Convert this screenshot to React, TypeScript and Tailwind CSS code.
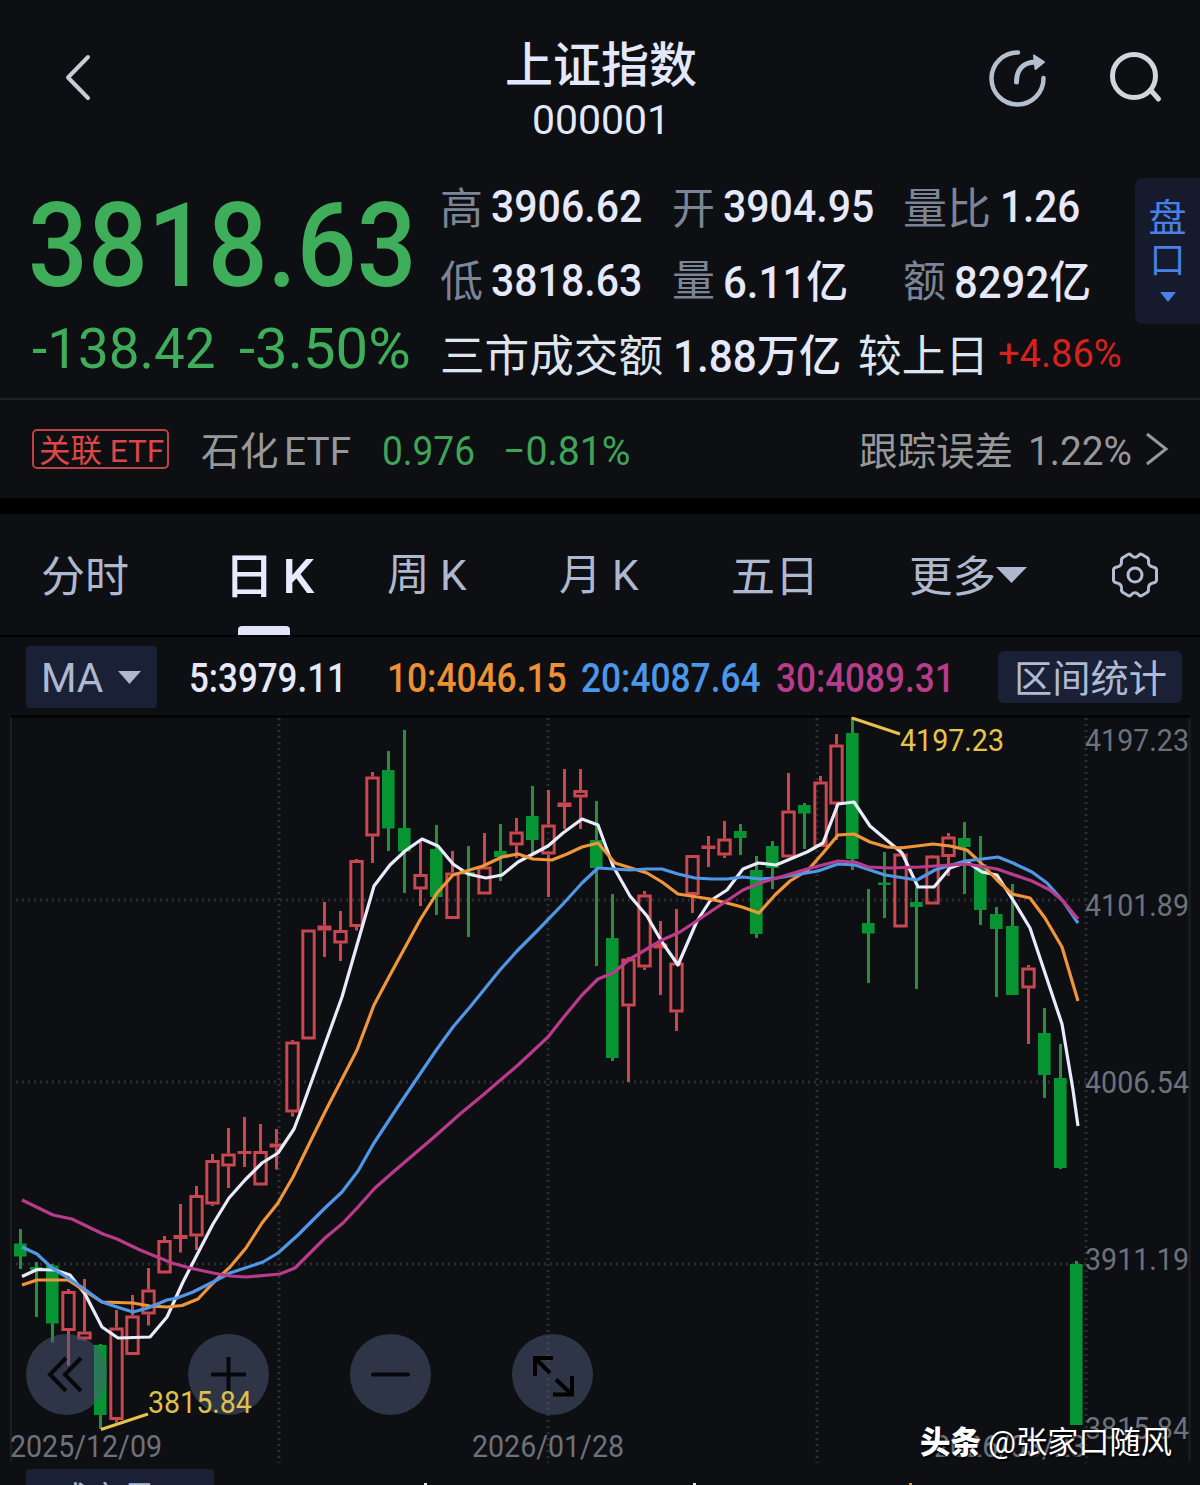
import { useLayoutEffect, useRef, useState } from 'react';
import type { ReactNode } from 'react';

type Candle = [kind: 'r' | 'g', high: number, top: number, bottom: number, low: number];

// Chart coordinates share the page's pixel grid, CHART_TOP is where the svg starts.
const CHART_TOP = 714;

const candles: Candle[] = [
  ['g', 1229, 1243.5, 1256.5, 1269],
  ['g', 1262, 1267, 1270, 1317],
  ['g', 1264, 1265.5, 1323.5, 1342.5],
  ['r', 1289, 1291, 1331, 1365.5],
  ['r', 1279, 1331.5, 1339.5, 1340.5],
  ['g', 1344, 1345, 1415, 1429],
  ['r', 1310, 1327.5, 1420, 1422.5],
  ['r', 1295, 1315.5, 1355, 1355],
  ['r', 1268, 1289.5, 1314.5, 1325.5],
  ['r', 1236, 1240, 1273.5, 1273.5],
  ['r', 1204, 1235, 1239, 1252.5],
  ['r', 1186, 1195, 1236.5, 1250],
  ['r', 1154, 1160, 1204.5, 1206],
  ['r', 1128, 1153.5, 1166.5, 1188],
  ['r', 1117, 1151, 1154, 1167],
  ['r', 1124, 1151, 1185.5, 1185.5],
  ['r', 1129, 1143.5, 1147.5, 1169.5],
  ['r', 1040, 1041.5, 1112.5, 1116.5],
  ['r', 929.5, 929.5, 1039.5, 1039.5],
  ['r', 902, 925.5, 930.5, 957],
  ['r', 911, 930, 943.5, 961],
  ['r', 859, 860, 927, 930.5],
  ['r', 772, 776.5, 836.5, 863],
  ['g', 751, 770, 828.5, 851],
  ['g', 730, 828, 851.5, 893],
  ['r', 840, 874, 889.5, 906],
  ['g', 825, 849, 897, 915],
  ['r', 851, 872.5, 919, 919],
  ['g', 846, 872, 874.5, 937],
  ['r', 833, 866.5, 894.5, 894.5],
  ['g', 824, 851, 857, 881],
  ['r', 818, 831.5, 845.5, 858],
  ['g', 786, 816, 840, 853],
  ['r', 790, 824.5, 854.5, 897],
  ['r', 769, 802.5, 807, 829],
  ['r', 769, 790, 797.5, 829],
  ['g', 801, 840, 868, 966],
  ['g', 894, 938, 1058, 1061],
  ['r', 957, 958.5, 1006.5, 1082],
  ['r', 891, 894.5, 967.5, 970],
  ['r', 921, 943.5, 948.5, 995],
  ['r', 909, 962.5, 1012.5, 1031],
  ['r', 855, 855, 895, 913],
  ['r', 836, 845.5, 849, 867],
  ['r', 821, 838.5, 855.5, 858],
  ['g', 824, 831, 838, 855],
  ['g', 856, 870, 934, 938],
  ['g', 841, 846, 868, 889],
  ['r', 773, 810.5, 857.5, 857.5],
  ['g', 803, 805, 813.5, 849],
  ['r', 776, 781.5, 847, 847],
  ['r', 734, 744.5, 804.5, 840],
  ['g', 717, 733, 859, 870],
  ['g', 889, 923, 933.5, 983],
  ['g', 852, 882.5, 885, 918],
  ['r', 846, 853.5, 927.5, 927.5],
  ['g', 887, 902, 907, 989],
  ['r', 855, 855.5, 904.5, 904.5],
  ['r', 833, 836.5, 857, 876],
  ['g', 822, 838, 847, 894],
  ['g', 836, 864, 910, 925],
  ['g', 907, 914, 929, 997],
  ['g', 884, 926, 995, 995],
  ['r', 965, 967.5, 988.5, 1044],
  ['g', 1008, 1033, 1075, 1098],
  ['g', 1044, 1078, 1168, 1169],
  ['g', 1261, 1264, 1425, 1425],
];

const averages = [
  {
    color: '#e9ebfb',
    points:
      '22,1276.5 37,1269.5 55,1270 70,1275 85,1294 102,1327 118,1338 150,1337 167,1317 183,1282 200,1249 213,1224 229,1198 245,1180 262,1163 278,1153 294,1129 302,1108 342,997 374,886 390,865 405,851 422,839 438,846 453,864 468,874 486,878 502,875 518,862 533,854 548,846 563,833 582,819 598,825 613,866 630,896 647,916 662,942 678,965 697,921 710,901 727,890 743,869 758,863 776,865 807,852 823,843 838,804 854,802 870,826 902,853 918,887 934,887 950,868 967,862 982,872 997,875 1013,900 1030,928 1046,976 1062,1024 1073,1090 1078,1126',
  },
  {
    color: '#f0953a',
    points:
      '22,1285 37,1280 68,1280 102,1302 133,1303 150,1306 167,1307 182,1305.5 198,1299 213,1283 230,1267 246,1248 262,1223 278,1203 293,1177 316,1130 327,1108 357,1050 374,1005 390,975 420,920 437,893 453,875 483,866 502,857 518,854 533,859 552,860 567,854 582,847 598,843 615,863 647,873 662,882 678,894 710,899 727,903 742,907 759,913 775,895 790,881 808,870 823,853 838,835 854,834 870,842 887,847 900,848 917,846 933,844 950,846 967,850 980,862 997,880 1012,894 1030,898 1045,918 1062,947 1078,1001',
  },
  {
    color: '#4f98e8',
    points:
      '22,1247 37,1254 52,1268 68,1278 83,1288 102,1302 117,1307 133,1312 148,1308 167,1300 177,1298 193,1292 213,1282 230,1273 263,1262 278,1253 298,1235 325,1208 342,1192 358,1171 374,1143 397,1108 422,1071 437,1049 453,1027 470,1007 500,970 517,951 535,933 563,904 582,883 598,868 630,870 647,869 662,869 678,874 695,878 712,879 727,879 743,877 760,879 777,878 818,871 838,864 855,865 885,875 917,880 935,870 965,861 982,859 998,857 1013,863 1032,872 1047,883 1063,901 1078,923',
  },
  {
    color: '#bb3a8c',
    points:
      '22,1200 53,1215 72,1219 103,1234 117,1239 140,1250 172,1263 190,1268 213,1273 230,1276 246,1277 280,1274 295,1268 325,1238 343,1223 358,1207 375,1188 392,1173 433,1138 460,1114 483,1095 518,1065 548,1037 563,1018 582,995 598,979 613,973 630,959 662,940 680,932 710,912 743,890 760,883 777,878 807,869 838,861 855,862 868,867 890,868 920,867 950,865 967,864 997,869 1032,881 1050,890 1063,901 1078,919',
  },
];

const axisLabels = [
  { text: '4197.23', y: 751 },
  { text: '4101.89', y: 916 },
  { text: '4006.54', y: 1093 },
  { text: '3911.19', y: 1270 },
  { text: '3815.84', y: 1439 },
];

// Squeezes or stretches one line of text to an exact width.
function Fit({ w, className = '', children }: { w: number; className?: string; children: ReactNode }) {
  const ref = useRef<HTMLSpanElement>(null);
  const [scale, setScale] = useState(1);

  useLayoutEffect(() => {
    if (ref.current) setScale(w / ref.current.offsetWidth);
  }, [w]);

  return (
    <span className={`block shrink-0 whitespace-nowrap leading-none ${className}`} style={{ width: w }}>
      <span ref={ref} className="inline-block origin-left" style={{ transform: `scaleX(${scale})` }}>
        {children}
      </span>
    </span>
  );
}

function Header() {
  return (
    <header className="flex h-[160px] items-start justify-between">
      <svg className="ml-[62px] mt-[52px] h-[52px] w-[32px]" viewBox="0 0 32 52" fill="none" stroke="#c9cbd6" strokeWidth="4" strokeLinecap="round" strokeLinejoin="round">
        <path d="M26 5L6 25.5L26 46" />
      </svg>
      <div className="ml-[120px] mt-[42px] flex flex-col items-center text-[#e4e8fb]">
        <h1 className="text-5xl font-medium leading-none">上证指数</h1>
        <Fit w={138} className="mt-[11px] text-[40px]">000001</Fit>
      </div>
      <div className="mr-[34px] mt-[47px] flex gap-[58px]">
        <svg className="h-[62px] w-[62px]" viewBox="0 0 62 62" fill="none" stroke="#b4bfd0" strokeWidth="4.5" strokeLinecap="round" strokeLinejoin="round">
          <path d="M30 5.5A26 26 0 1 0 55.500 31" />
          <path d="M28.500 35C28.500 22 36 15.500 47 15" strokeWidth="5" />
          <path d="M46 8.500L56 15L47.500 22Z" fill="#b4bfd0" strokeWidth="2" />
        </svg>
        <svg className="h-[58px] w-[58px]" viewBox="0 0 58 58" fill="none" stroke="#d3d4dc" strokeWidth="5" strokeLinecap="round">
          <circle cx="26" cy="29" r="21.500" />
          <path d="M43 43.500L50.500 52" />
        </svg>
      </div>
    </header>
  );
}

function Quote() {
  return (
    <section className="flex h-[240px] border-b-2 border-[#202226] pt-[18px]">
      <div className="ml-[28px] w-[412px] text-[#3fae5a]">
        <Fit w={389} className="mt-[10px] text-[117px] font-medium">3818.63</Fit>
        <div className="mt-[16px] flex pl-[4px] text-[56px]">
          <Fit w={184}>-138.42</Fit>
          <Fit w={172} className="ml-[23px]">-3.50%</Fit>
        </div>
      </div>
      <div className="flex w-[695px] flex-col text-[44px] font-medium text-[#e6e8fb]">
        <div className="flex h-[58px] items-center">
          <Fit w={43} className="pt-[4px] text-[43px] font-normal text-[#7b8597]">高</Fit>
          <Fit w={151} className="ml-[8px]">3906.62</Fit>
          <Fit w={43} className="ml-[30px] pt-[4px] text-[43px] font-normal text-[#7b8597]">开</Fit>
          <Fit w={151} className="ml-[8px]">3904.95</Fit>
          <Fit w={88} className="ml-[29px] pt-[4px] text-[43px] font-normal text-[#7b8597]">量比</Fit>
          <Fit w={80} className="ml-[9px]">1.26</Fit>
        </div>
        <div className="mt-[15px] flex h-[58px] items-center">
          <Fit w={43} className="pt-[4px] text-[43px] font-normal text-[#7b8597]">低</Fit>
          <Fit w={151} className="ml-[8px] pt-[2px]">3818.63</Fit>
          <Fit w={43} className="ml-[30px] pt-[2px] text-[43px] font-normal text-[#7b8597]">量</Fit>
          <Fit w={125} className="ml-[8px] pt-[5px]">6.11亿</Fit>
          <Fit w={43} className="ml-[55px] pt-[4px] text-[43px] font-normal text-[#7b8597]">额</Fit>
          <Fit w={137} className="ml-[8px] pt-[5px]">8292亿</Fit>
        </div>
        <div className="mt-[17px] flex h-[58px] items-center pt-[3px]">
          <Fit w={223} className="text-[44px] font-normal text-[#dfe5ee]">三市成交额</Fit>
          <Fit w={168} className="ml-[10px]">1.88万亿</Fit>
          <Fit w={131} className="ml-[17px] text-[44px] font-normal text-[#dfe5ee]">较上日</Fit>
          <Fit w={124} className="ml-[9px] pb-[4px] text-[39px] font-normal text-[#d8211d]">+4.86%</Fit>
        </div>
      </div>
      <button className="flex h-[146px] w-[65px] flex-col items-center rounded-l-lg bg-[#151b2c] pt-[19px] text-[38px] leading-[43px] text-[#4a80e4]">
        <span>盘</span>
        <span className="text-[36px]">口</span>
        <svg className="mt-[9px] h-[10px] w-[16px]" viewBox="0 0 16 10" fill="#4a80e4">
          <path d="M0 0H16L8 10Z" />
        </svg>
      </button>
    </section>
  );
}

function EtfRow() {
  return (
    <section className="flex h-[98px] items-center text-[#97989b]">
      <div className="ml-8 flex h-10 w-[137px] items-center rounded-[5px] border-2 border-[#bf4244] pl-[5px] pt-[3px] text-[#dd4747]">
        <Fit w={125} className="text-[32px]">关联 ETF</Fit>
      </div>
      <Fit w={150} className="ml-8 pt-[6px] text-[39px] [word-spacing:-4px]">石化 ETF</Fit>
      <Fit w={93} className="ml-[31px] pt-[4px] text-[41px] text-[#3fa458]">0.976</Fit>
      <Fit w={127} className="ml-[28px] pt-[4px] text-[41px] text-[#3fa458]">−0.81%</Fit>
      <Fit w={154} className="ml-[229px] pt-[6px] text-[39px]">跟踪误差</Fit>
      <Fit w={104} className="ml-[15px] pt-[4px] text-[41px]">1.22%</Fit>
      <svg className="ml-[13px] h-[34px] w-[24px]" viewBox="0 0 24 34" fill="none" stroke="#97989b" strokeWidth="3">
        <path d="M2 2L21 17L2 32" />
      </svg>
    </section>
  );
}

function Tabs() {
  return (
    <nav className="flex h-[123px] items-center border-b-2 border-black text-[43px] text-[#aeb8ce]">
      <Fit w={88} className="ml-[41px] pt-[6px]">分时</Fit>
      <div className="ml-[95px] flex h-full w-[90px] flex-col items-center justify-between pt-[39px]">
        <Fit w={90} className="text-5xl font-medium text-[#e8ebfd] [word-spacing:-4px]">日 K</Fit>
        <div className="mr-[10px] h-[9px] w-[52px] rounded-t-sm bg-[#e1e5fb]" />
      </div>
      <Fit w={80} className="ml-[73px] pt-[2px]">周 K</Fit>
      <Fit w={80} className="ml-[92px] pt-[2px]">月 K</Fit>
      <Fit w={88} className="ml-[92px] pt-[6px]">五日</Fit>
      <Fit w={87} className="ml-[90px] pt-[6px]">更多</Fit>
      <svg className="h-[16px] w-[31px]" viewBox="0 0 31 16" fill="#aeb8ce">
        <path d="M0 0H31L15.500 16Z" />
      </svg>
      <svg className="ml-[84px] h-[48px] w-[48px]" viewBox="0 0 48 48" fill="none" stroke="#b3bdd2" strokeWidth="3" strokeLinejoin="round">
        <path d="M17 3.500Q19 2.500 20.500 4.500Q24 8 27.500 4.500Q29 2.500 31 3.500L36 6.500Q38 8 37.500 10Q37 15 42 16Q45 16.500 45.500 18.500V29.500Q45 31.500 42 32Q37 33 37.500 38Q38 40 36 41.500L31 44.500Q29 45.500 27.500 43.500Q24 40 20.500 43.500Q19 45.500 17 44.500L12 41.500Q10 40 10.500 38Q11 33 6 32Q3 31.500 2.500 29.500V18.500Q3 16.500 6 16Q11 15 10.500 10Q10 8 12 6.500Z" />
        <circle cx="24" cy="24" r="7" />
      </svg>
    </nav>
  );
}

function MaBar() {
  return (
    <div className="flex h-[77px] items-center pt-[3px] text-[40px]">
      <button className="ml-[26px] flex h-[62px] w-[131px] items-center rounded-sm bg-[#1a2136] text-[#aeb8ce]">
        <Fit w={62} className="ml-[15px] pt-[4px]">MA</Fit>
        <svg className="ml-[15px] h-[13px] w-[23px]" viewBox="0 0 23 13" fill="#aeb8ce">
          <path d="M0 0H23L11.500 13Z" />
        </svg>
      </button>
      <Fit w={158} className="ml-[32px] pt-[4px] font-medium text-[#e6e8fb]">5:3979.11</Fit>
      <Fit w={180} className="ml-[40px] pt-[4px] font-medium text-[#ee9135]">10:4046.15</Fit>
      <Fit w={180} className="ml-[14px] pt-[4px] font-medium text-[#4b97ea]">20:4087.64</Fit>
      <Fit w={179} className="ml-[15px] pt-[4px] font-medium text-[#b93c8b]">30:4089.31</Fit>
      <button className="ml-[43px] flex h-[52px] w-[184px] items-center justify-center rounded-md bg-[#1a2136] pt-[3px] text-[#b0bad2]">
        <Fit w={153} className="text-[38px]">区间统计</Fit>
      </button>
    </div>
  );
}

function CandleShape({ candle, index }: { candle: Candle; index: number }) {
  const [kind, high, top, bottom, low] = candle;
  const x = 20.5 + index * 16;
  if (kind === 'g') {
    return (
      <g fill="#079433">
        <rect x={x - 1.5} y={high} width="3" height={low - high} fill="#2c8c42" />
        <rect x={x - 6.5} y={top} width="12.6" height={bottom - top} />
      </g>
    );
  }
  const solid = bottom - top < 6;
  return (
    <g fill="#cb474f">
      <rect x={x - 1.5} y={high} width="3" height={Math.max(top - high, 0)} />
      <rect x={x - 1.5} y={bottom} width="3" height={Math.max(low - bottom, 0)} />
      {solid ? (
        <rect x={x - 7} y={top} width="14" height={bottom - top} />
      ) : (
        <rect x={x - 5.7} y={top + 1.5} width="11.4" height={bottom - top - 3} fill="none" stroke="#cb474f" strokeWidth="3" />
      )}
    </g>
  );
}

function Chart() {
  return (
    <svg className="block h-[752px] w-full" viewBox={`0 ${CHART_TOP} 1200 752`}>
      <path d="M11 716.500H1190" stroke="#000" strokeWidth="2" />
      <path d="M11 718V1462M1189.500 718V1462" stroke="#1c1e22" strokeWidth="2" />
      <g stroke="#2a2d32" strokeWidth="3" strokeDasharray="2 4">
        {[279, 548, 817, 1086].map((x) => (
          <path key={x} d={`M${x} 718V1463`} />
        ))}
        {[900, 1082, 1264].map((y) => (
          <path key={y} d={`M16 ${y}H1086`} />
        ))}
      </g>
      {candles.map((candle, i) => (
        <CandleShape key={i} candle={candle} index={i} />
      ))}
      <g fill="none" strokeWidth="3.2" strokeLinejoin="round">
        {averages.map((line) => (
          <polyline key={line.color} points={line.points} stroke={line.color} />
        ))}
      </g>
      <path d="M852 718L900 734M101 1429.500L148 1414" stroke="#e6c34c" strokeWidth="3" fill="none" />
      <g fontSize="30.500">
        <text x="900" y="751" textLength="104" lengthAdjust="spacingAndGlyphs" fill="#e6c547">4197.23</text>
        <g fill="#6d717c">
          {axisLabels.map((label) => (
            <text key={label.text} x="1085" y={label.y} textLength="104" lengthAdjust="spacingAndGlyphs">
              {label.text}
            </text>
          ))}
          <text x="10" y="1457" textLength="152" lengthAdjust="spacingAndGlyphs">2025/12/09</text>
          <text x="472" y="1457" textLength="152" lengthAdjust="spacingAndGlyphs">2026/01/28</text>
          <text x="934" y="1457" textLength="152" lengthAdjust="spacingAndGlyphs">2026/03/23</text>
        </g>
      </g>
    </svg>
  );
}

function RoundButton({ children }: { children: ReactNode }) {
  return (
    <button className="h-[81px] w-[81px] rounded-full bg-[#4e5c79]/50">
      <svg viewBox="0 0 81 81" fill="none" stroke="#06080c" strokeWidth="4">
        {children}
      </svg>
    </button>
  );
}

function ChartControls() {
  return (
    <div className="absolute left-[26px] top-[620px] flex gap-[81px]">
      <RoundButton>
        <path d="M40 24L24 40.500L40 57M55 24L39 40.500L55 57" />
      </RoundButton>
      <RoundButton>
        <path d="M23 40.500H58M40.500 23V58" />
      </RoundButton>
      <RoundButton>
        <path d="M23 40.500H58" strokeLinecap="round" />
      </RoundButton>
      <RoundButton>
        <path d="M41 24H23V42M23 24L38 39M41 60.500H60V42M60 60.500L44 45.500" stroke="#000" />
      </RoundButton>
    </div>
  );
}

export default function App() {
  return (
    <main className="flex h-[1485px] w-[1200px] flex-col overflow-hidden bg-[#0d0f13] font-['Roboto','Noto_Sans_CJK_SC',sans-serif]">
      <Header />
      <Quote />
      <EtfRow />
      <div className="h-4 shrink-0 bg-black" />
      <Tabs />
      <MaBar />
      <section className="relative">
        <Chart />
        <ChartControls />
        <Fit w={104} className="absolute left-[148px] top-[674px] text-[30.5px] text-[#dfc04a]">3815.84</Fit>
        <div className="absolute left-[920px] top-[713px] flex items-center gap-[7px] text-white [text-shadow:1px_2px_2px_#000]">
          <Fit w={61} className="text-[31px] font-black">头条</Fit>
          <Fit w={184} className="text-[31px]">@张家口随风</Fit>
        </div>
      </section>
      <footer className="flex h-[19px] items-start overflow-hidden pt-[3px]">
        <button className="ml-[26px] flex h-[60px] w-[188px] shrink-0 items-start rounded-sm bg-[#1a2136] pl-[30px] pt-[13px] text-[38px] text-[#aeb8ce]">
          <Fit w={100}>成交量</Fit>
        </button>
        {/* tips of the volume figures below the fold */}
        <div className="ml-[210px] mt-[14px] h-1 w-[3px] bg-[#e6e8fb]" />
        <div className="ml-[266px] mt-[14px] h-1 w-[3px] bg-[#e6e8fb]" />
        <div className="ml-[213px] mt-[14px] h-1 w-[3px] bg-[#ee9135]" />
      </footer>
    </main>
  );
}
